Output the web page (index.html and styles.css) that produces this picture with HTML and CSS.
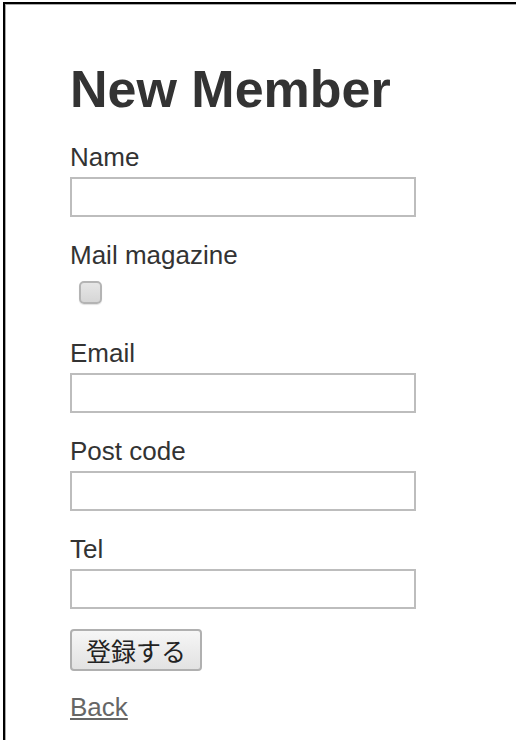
FILE: index.html
```html
<!DOCTYPE html>
<html lang="ja">
<head>
<meta charset="utf-8">
<title>New Member</title>
<link rel="stylesheet" href="styles.css">
</head>
<body>
<div class="frame">
  <div class="page">
    <h1 class="title">New Member</h1>
    <form class="form">
      <div class="field">
        <label class="label" for="name">Name</label>
        <div class="control"><input class="text" type="text" id="name"></div>
      </div>
      <div class="field">
        <label class="label" for="mail">Mail magazine</label>
        <div class="control"><input class="check" type="checkbox" id="mail"></div>
      </div>
      <div class="field">
        <label class="label" for="email">Email</label>
        <div class="control"><input class="text" type="text" id="email"></div>
      </div>
      <div class="field">
        <label class="label" for="post">Post code</label>
        <div class="control"><input class="text" type="text" id="post"></div>
      </div>
      <div class="field">
        <label class="label" for="tel">Tel</label>
        <div class="control"><input class="text" type="text" id="tel"></div>
      </div>
      <div class="actions">
        <button class="submit" type="button">登録する</button>
      </div>
    </form>
    <a class="back" href="#">Back</a>
  </div>
</div>
</body>
</html>
```

FILE: styles.css
```css
html, body {
  margin: 0;
  padding: 0;
  background: #fff;
}

body {
  font-family: "Liberation Sans", Arial, "Noto Sans CJK JP", sans-serif;
  font-size: 26px;
  line-height: 36px;
  color: #333;
  height: 740px;
  overflow: hidden;
}

.frame {
  margin: 2px 0 0 3px;
  border-top: 2px solid #000;
  border-left: 2px solid #000;
  height: 736px;
}

.page {
  border-top: 1px solid #a8a8a8;
  border-left: 1px solid #a8a8a8;
  padding: 66px 0 0 64px;
  height: 100%;
  box-sizing: border-box;
}

.title {
  margin: 0 0 34px 0;
  font-size: 52px;
  line-height: 36px;
  font-weight: bold;
  color: #333;
}

.form {
  display: flex;
  flex-direction: column;
}

.field {
  display: flex;
  flex-direction: column;
  margin-bottom: 20px;
}

.label {
  display: block;
  height: 36px;
  line-height: 32px;
  color: #333;
}

.control {
  height: 42px;
}

.text {
  display: block;
  box-sizing: border-box;
  width: 346px;
  height: 40px;
  margin: 0;
  padding: 2px 4px;
  border: 2px solid #bdbdbd;
  border-radius: 0;
  background: #fff;
  font: inherit;
}

.check {
  appearance: none;
  -webkit-appearance: none;
  display: block;
  box-sizing: border-box;
  width: 23px;
  height: 23px;
  margin: 6px 0 0 9px;
  border: 2px solid #b4b4b4;
  border-radius: 5px;
  background: linear-gradient(#e6e6e6, #d6d6d6);
  box-shadow: 0 1px 1px rgba(0,0,0,0.12);
}

.actions {
  margin-top: -2px;
  margin-bottom: 18px;
}

.submit {
  display: block;
  box-sizing: border-box;
  width: 132px;
  height: 42px;
  margin: 0;
  padding: 0;
  border: 2px solid #b0b0b0;
  border-radius: 4px;
  background: linear-gradient(#f6f6f6, #e2e2e2);
  font-family: "Noto Sans CJK JP", "Liberation Sans", sans-serif;
  font-size: 25px;
  line-height: 36px;
  color: #222;
}

.back {
  display: inline-block;
  line-height: 36px;
  color: #666;
  text-decoration: underline;
}
```
